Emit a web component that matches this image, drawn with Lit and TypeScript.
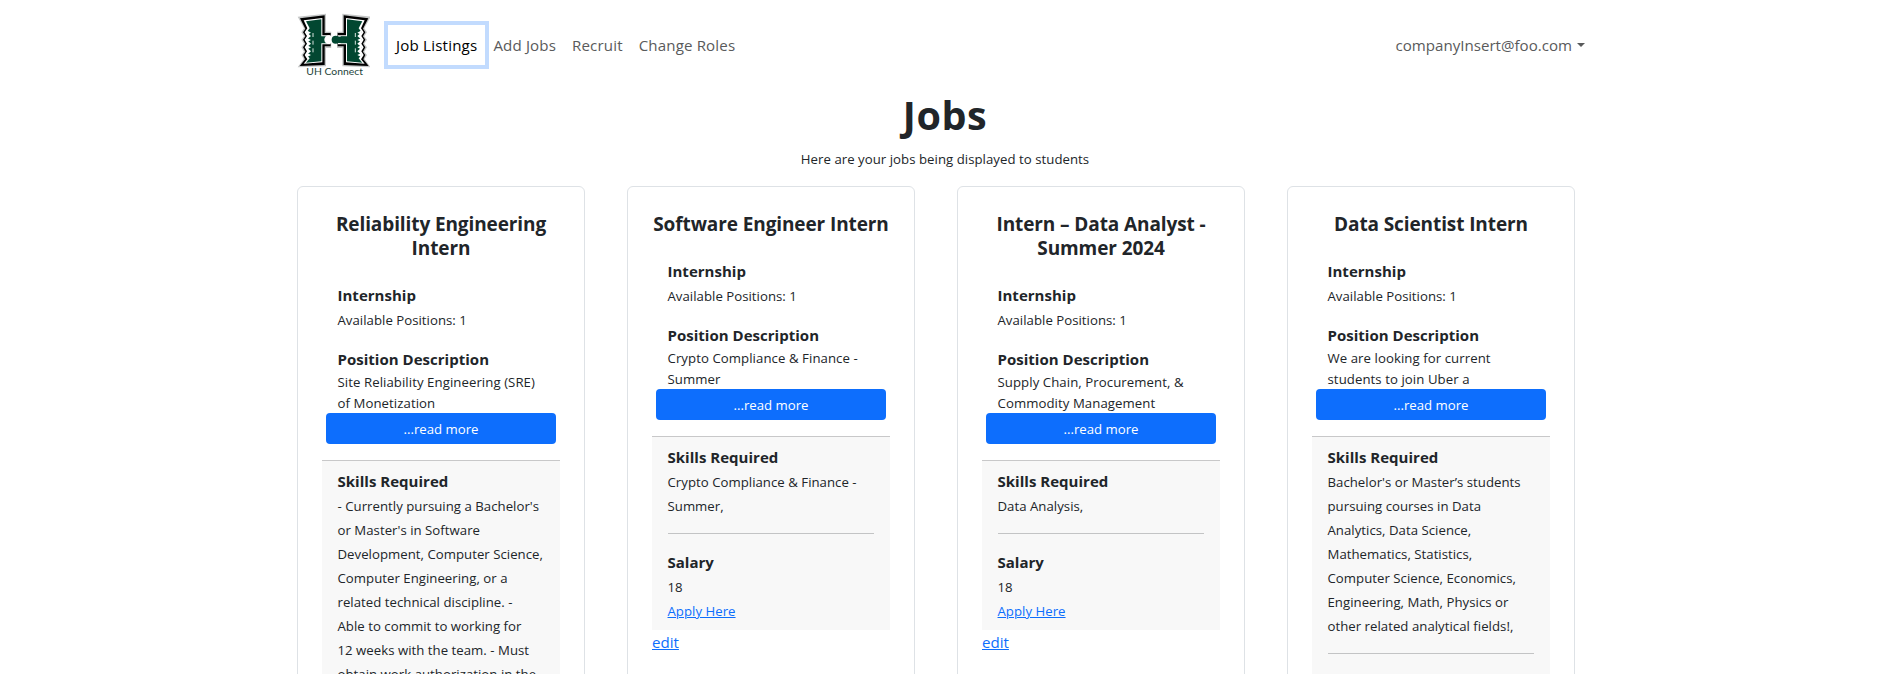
import { LitElement, html, css, svg } from "lit";
import { customElement, property } from "lit/decorators.js";

interface Job {
  title: string[];
  description: string[];
  skills: string[];
  salary: string;
}

const jobs: Job[] = [
  {
    title: ["Reliability Engineering", "Intern"],
    description: ["Site Reliability Engineering (SRE)", "of Monetization"],
    skills: [
      "- Currently pursuing a Bachelor's",
      "or Master's in Software",
      "Development, Computer Science,",
      "Computer Engineering, or a",
      "related technical discipline. -",
      "Able to commit to working for",
      "12 weeks with the team. - Must",
      "obtain work authorization in the",
    ],
    salary: "18",
  },
  {
    title: ["Software Engineer Intern"],
    description: ["Crypto Compliance & Finance -", "Summer"],
    skills: ["Crypto Compliance & Finance -", "Summer,"],
    salary: "18",
  },
  {
    title: ["Intern – Data Analyst -", "Summer 2024"],
    description: ["Supply Chain, Procurement, &", "Commodity Management"],
    skills: ["Data Analysis,"],
    salary: "18",
  },
  {
    title: ["Data Scientist Intern"],
    description: ["We are looking for current", "students to join Uber a"],
    skills: [
      "Bachelor's or Master’s students",
      "pursuing courses in Data",
      "Analytics, Data Science,",
      "Mathematics, Statistics,",
      "Computer Science, Economics,",
      "Engineering, Math, Physics or",
      "other related analytical fields!,",
    ],
    salary: "18",
  },
];

const lines = (items: string[]) => items.map((t) => html`<span class="line">${t}</span>`);

@customElement("job-card")
class JobCard extends LitElement {
  @property({ attribute: false }) job!: Job;

  static styles = css`
    :host {
      display: block;
      box-sizing: border-box;
      width: 288px;
      border: 1px solid #dee2e6;
      border-radius: 6px;
      padding: 25px 24px 24px;
      background: #fff;
    }
    .line { display: block; white-space: nowrap; }
    h2 {
      margin: 0 0 23px;
      font-size: 19px;
      line-height: 24px;
      font-weight: 700;
      text-align: center;
      letter-spacing: -0.1px;
    }
    h3 {
      margin: 0 0 1px;
      font-size: 15px;
      line-height: 24px;
      font-weight: 700;
      letter-spacing: 0.02px;
    }
    .body { padding: 0 16px 0 15.5px; }
    .text { font-size: 13.2px; line-height: 24px; letter-spacing: 0.03px; }
    .description { margin-top: 15px; }
    .description .text { line-height: 21px; letter-spacing: 0.07px; }
    .more {
      display: block;
      width: 230px;
      height: 31px;
      margin: -1px 4px 16px;
      padding: 0;
      border: 0;
      border-radius: 4px;
      background: #0d6efd;
      color: #fff;
      font: 13.2px/30px "Open Sans", sans-serif;
      text-align: center;
    }
    .details {
      border-top: 1px solid #c8c8c9;
      background: #f8f8f8;
      padding: 8px 16px 7px 15.5px;
    }
    .rule { height: 1px; margin: 15px 0 16px; background: #c3c4c5; }
    a { color: #0d6efd; text-decoration: underline; }
    .edit { display: block; font-size: 15.1px; line-height: 24px; }
  `;

  render() {
    const j = this.job;
    return html`
      <h2>${lines(j.title)}</h2>
      <div class="body">
        <h3>Internship</h3>
        <div class="text">Available Positions: 1</div>
        <div class="description">
          <h3>Position Description</h3>
          <div class="text">${lines(j.description)}</div>
        </div>
      </div>
      <button class="more">...read more</button>
      <div class="details">
        <h3>Skills Required</h3>
        <div class="text">${lines(j.skills)}</div>
        <div class="rule"></div>
        <h3>Salary</h3>
        <div class="text">${j.salary}</div>
        <div class="text"><a>Apply Here</a></div>
      </div>
      <a class="edit">edit</a>
    `;
  }
}

const half = svg`
  <path d="M8 23 L93 14 V68 H110 V117 H93 V172 L8 175 L26 150 L19 138 L27 128 L19 115 L27 104 L19 92 L27 82 L19 70 L27 58 Z"
    fill="#c4c6c6"/>
  <path d="M15 28 L89 19 V72 H107 V112 H89 V168 L14 171 L30 151 L24 138 L31 128 L24 115 L31 104 L24 92 L31 82 L24 70 L31 59 Z"
    fill="#000"/>
  <path d="M26 34 L82 27 V79 H106 V106 H82 V160 L26 164 L37 151 L29 138 L36 127 L29 115 L36 104 L29 92 L36 81 L29 70 L37 58 Z" fill="#fff"/>
  <path d="M33 37 L79 31 V82 H98 V103 H79 V157 L33 161 L44 148 L35 138 L48 127 L35 115 L48 104 L35 92 L48 81 L35 70 L44 58 Z" fill="#024731"/>
  <path d="M35 64 L48 71 L35 78 Z M35 86 L48 93 L35 100 Z M35 108 L48 115 L35 122 Z M35 131 L48 138 L35 145 Z" fill="#fff"/>
  <path d="M54 72 V84 M54 95 V107 M54 118 V130" stroke="#d8e3df" stroke-width="3"/>
`;

@customElement("brand-logo")
class BrandLogo extends LitElement {
  static styles = css`
    :host { display: block; width: 73px; height: 72px; }
    svg { display: block; width: 73px; height: 72px; }
    .name { font: 29px Lato, "Open Sans", sans-serif; fill: #24443a; }
  `;

  render() {
    return html`<svg viewBox="6 0 219 216">
      ${half}
      <g transform="translate(235 0) scale(-1 1)">${half}</g>
      <rect x="109" y="62" width="17" height="58" fill="#fff"/>
      <circle cx="101" cy="92" r="13" fill="#fff"/>
      <circle cx="122" cy="92" r="12" fill="#024731"/>
      <rect x="122" y="83" width="30" height="19" fill="#024731"/>
      <text class="name" x="34" y="199" textLength="170" lengthAdjust="spacingAndGlyphs">UH Connect</text>
    </svg>`;
  }
}

@customElement("app-root")
class AppRoot extends LitElement {
  static styles = css`
    :host {
      display: block;
      height: 674px;
      overflow: hidden;
      background: #fff;
      color: #212529;
      font-family: "Open Sans", "Noto Sans", sans-serif;
    }
    nav {
      display: flex;
      align-items: center;
      height: 74px;
      padding: 8px 309px 8px 297px;
      font-size: 15.1px;
      color: #595a5b;
    }
    .links { display: flex; margin-left: 18px; }
    .link {
      height: 40px;
      padding: 0 8px;
      line-height: 40px;
      white-space: nowrap;
      letter-spacing: 0.14px;
    }
    .active { color: #000; box-shadow: 0 0 0 4px #c2dbfe; letter-spacing: 0.2px; }
    .account { display: flex; align-items: center; margin-left: auto; gap: 5px; }
    .caret {
      border: 4.5px solid transparent;
      border-top-color: #595a5b;
      border-bottom: 0;
    }
    header { width: 1296px; margin-left: 297px; text-align: center; }
    h1 { margin: 1px 0 8px; font-size: 39.5px; line-height: 48px; font-weight: 700; letter-spacing: 0.6px; }
    header p { margin: 0; font-size: 13.2px; line-height: 24px; letter-spacing: 0.04px; }
    main {
      display: grid;
      grid-template-columns: repeat(4, 288px);
      column-gap: 42px;
      margin: 15px 0 0 297px;
    }
  `;

  render() {
    return html`
      <nav>
        <brand-logo></brand-logo>
        <div class="links">
          <a class="link active">Job Listings</a>
          <a class="link">Add Jobs</a>
          <a class="link">Recruit</a>
          <a class="link">Change Roles</a>
        </div>
        <div class="account"><span>companyInsert@foo.com</span><span class="caret"></span></div>
      </nav>
      <header>
        <h1>Jobs</h1>
        <p>Here are your jobs being displayed to students</p>
      </header>
      <main>${jobs.map((job) => html`<job-card .job=${job}></job-card>`)}</main>
    `;
  }
}
